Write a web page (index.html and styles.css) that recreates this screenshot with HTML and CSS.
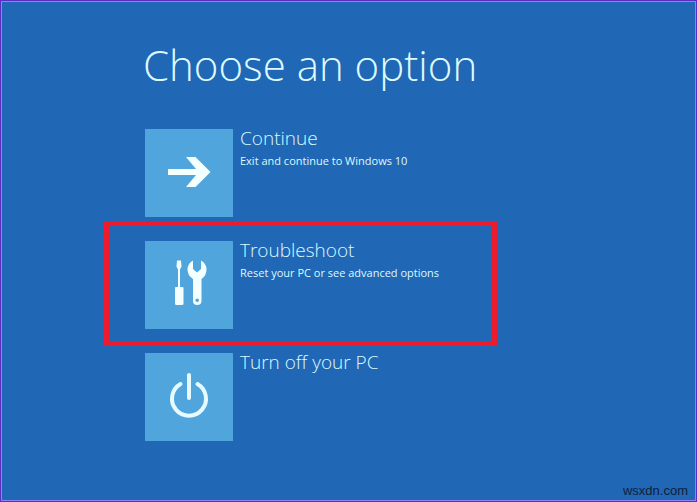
FILE: index.html
```html
<!DOCTYPE html>
<html lang="en">
<head>
  <meta charset="utf-8">
  <meta name="viewport" content="width=device-width, initial-scale=1.0">
  <title>Choose an option</title>
  <link rel="stylesheet" href="styles.css">
</head>
<body>
  <main class="screen">
    <h1 class="title">Choose an option</h1>

    <div class="options">
      <button class="option" type="button">
        <span class="tile">
          <svg viewBox="0 0 88 88" aria-hidden="true">
            <path d="M23 40h28L41 28h9.500L65.500 43 50.500 58H41L51 46H23z"/>
          </svg>
        </span>
        <span class="text">
          <span class="name">Continue</span>
          <span class="note">Exit and continue to Windows 10</span>
        </span>
      </button>

      <button class="option marked" type="button">
        <span class="tile">
          <svg viewBox="0 0 88 88" aria-hidden="true">
            <!-- screwdriver -->
            <path d="M32 19.500h4l.5 6-1.500 3V46h2.500q1 0 1 1v15.500q0 1.500-1.500 1.500h-5.500Q30 64 30 62.500V47q0-1 1-1h2V28.500l-1.500-3z"/>
            <!-- wrench -->
            <path fill-rule="evenodd" d="M48 19.500Q42.500 22.500 42.500 28.500q0 6 5.500 9.500V60q0 4 4.200 4t4.300-4V38q5-3.500 5-9.500 0-6-5.500-9V28l-4 3.500-4-3.500zM52.200 57.500a1.800 1.800 0 1 1 0 3.600 1.800 1.800 0 0 1 0-3.600z"/>
          </svg>
        </span>
        <span class="text">
          <span class="name">Troubleshoot</span>
          <span class="note">Reset your PC or see advanced options</span>
        </span>
      </button>

      <button class="option" type="button">
        <span class="tile">
          <svg viewBox="0 0 88 88" aria-hidden="true">
            <path class="line" d="M35.500 31A17 17 0 1 0 52.500 31M44 22V45"/>
          </svg>
        </span>
        <span class="text">
          <span class="name">Turn off your PC</span>
        </span>
      </button>
    </div>

    <footer class="credit">wsxdn.com</footer>
  </main>
</body>
</html>
```
FILE: styles.css
```css
* {
  box-sizing: border-box;
}

body {
  margin: 0;
  background: #2067b5;
  color: #dcfaff;
  font-family: "Open Sans", "Noto Sans", sans-serif;
}

.screen {
  display: flex;
  flex-direction: column;
  min-height: 100vh;
  padding: 32px 8px 2px 142px;
  border: 1px solid #5c2cc4;
  box-shadow: inset 0 0 0 1px #8f80f5;
}

.title {
  margin: 0 0 32px;
  font-size: 42px;
  font-weight: 300;
  line-height: 64px;
}

/* Option list */
.options {
  display: flex;
  flex-direction: column;
  gap: 24px;
  max-width: 336px;
  margin-left: 2px;
}

.option {
  position: relative;
  display: flex;
  gap: 7px;
  padding: 0;
  border: 0;
  background: none;
  color: inherit;
  font-family: inherit;
  text-align: left;
  cursor: pointer;
}

/* Red frame around the highlighted option */
.marked::after {
  content: "";
  position: absolute;
  inset: -20px -16px -17px -41px;
  border: 5px solid #ec1c2e;
}

.tile {
  flex: none;
  width: 88px;
  height: 88px;
  background: #50a6dc;
}

.tile svg {
  display: block;
  fill: #f4ffff;
}

.tile .line {
  fill: none;
  stroke: #e6fbff;
  stroke-width: 4;
  stroke-linecap: round;
}

.name,
.note {
  display: block;
  white-space: nowrap;
}

.name {
  font-size: 19px;
  font-weight: 300;
  line-height: 18px;
}

.note {
  margin-top: 6px;
  font-size: 11px;
  line-height: 16px;
}

.credit {
  margin-top: auto;
  color: #10203c;
  font-family: "Liberation Sans", Arial, sans-serif;
  font-size: 13px;
  line-height: 16px;
  text-align: right;
}
```
